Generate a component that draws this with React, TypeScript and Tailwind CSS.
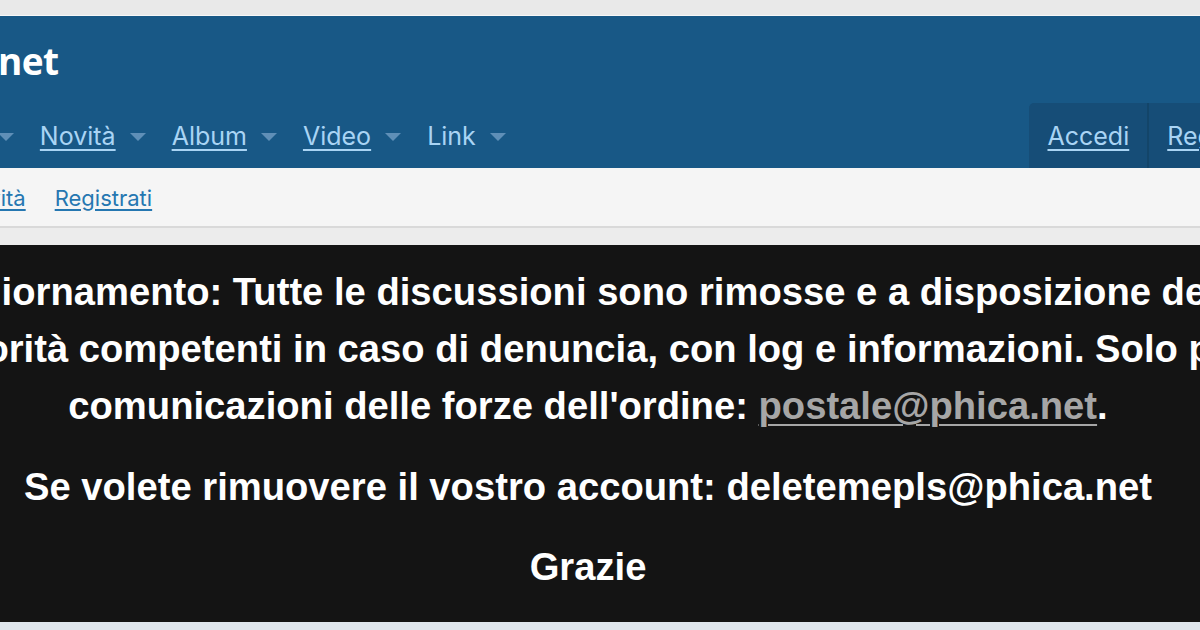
import React from "react";

const Caret = ({ className = "" }: { className?: string }) => (
  <svg width="16" height="9" viewBox="0 0 16 9" className={className}>
    <path d="M0 0 L16 0 L8 8 Z" fill="#5f8fb7" />
  </svg>
);

const navItems = ["Novità", "Album", "Video", "Link"];

export default function App() {
  const sys = { fontFamily: "Inter, Roboto, 'Noto Sans', sans-serif" };
  return (
    <div className="w-[1200px] h-[630px] overflow-hidden bg-[#ececec] flex flex-col" style={sys}>
      <div className="h-[16px] bg-[#e9e9e9] border-b border-[#f7f7f7] shrink-0" />
      <header className="bg-[#185886] shrink-0">
        <div className="h-[87px] flex items-center">
          <div
            className="ml-[-110px] text-white text-[37px] font-bold leading-none mt-[2px] tracking-[-0.5px]"
            style={{ fontFamily: "'Open Sans', sans-serif" }}
          >
            phica.net
          </div>
        </div>
        <div className="h-[65px] flex items-stretch">
          <nav className="flex items-center ml-[-91px] gap-[26px] pt-[2px]">
            <div className="flex items-center gap-[14px]">
              <a className="text-[25px] text-[#a9d4f4] underline underline-offset-[4px] decoration-[2px]">Forum</a>
              <Caret className="mt-[2px]" />
            </div>
            {navItems.map((n) => (
              <div key={n} className="flex items-center gap-[14px]">
                <a
                  className={
                    n === "Link"
                      ? "text-[25px] text-[#a9d4f4]"
                      : "text-[25px] text-[#a9d4f4] underline underline-offset-[4px] decoration-[2px]"
                  }
                >
                  {n}
                </a>
                <Caret className="mt-[2px]" />
              </div>
            ))}
          </nav>
          <div className="ml-auto flex items-stretch mr-[-96px]">
            <div className="bg-[#164d77] rounded-tl-[5px] flex items-center px-[18px] pt-[2px] border-r-2 border-[#134569]">
              <a className="text-[25px] text-[#a9d4f4] underline underline-offset-[4px] decoration-[2px]">Accedi</a>
            </div>
            <div className="bg-[#164d77] flex items-center px-[18px] pt-[2px]">
              <a className="text-[25px] text-[#a9d4f4] underline underline-offset-[4px] decoration-[2px]">Registrati</a>
            </div>
          </div>
        </div>
      </header>
      <div className="h-[60px] bg-[#f5f5f5] border-b-2 border-[#d9d9d9] flex items-center shrink-0">
        <div className="flex items-center gap-[29px] ml-[-41px] pt-[2px]">
          <a className="text-[22px] text-[#2577b1] underline underline-offset-[3px] decoration-[2px]">Novità</a>
          <a className="text-[22px] text-[#2577b1] underline underline-offset-[3px] decoration-[2px]">Registrati</a>
        </div>
      </div>
      <div className="h-[17px] bg-[#ececec] shrink-0" />
      <main className="h-[377px] bg-[#141414] shrink-0 w-[1200px]">
        <div
          className="w-[1176px] text-white font-bold text-[38.2px] leading-[57px] flex flex-col items-center pt-[18px]"
          style={{ fontFamily: "'Liberation Sans', Arial, sans-serif" }}
        >
          <p className="whitespace-nowrap">Aggiornamento: Tutte le discussioni sono rimosse e a disposizione delle</p>
          <p className="whitespace-nowrap">autorità competenti in caso di denuncia, con log e informazioni. Solo per</p>
          <p className="whitespace-nowrap">
            comunicazioni delle forze dell'ordine:{" "}
            <a className="text-[#a6a6a6] underline underline-offset-[5px] decoration-[2px]">postale@phica.net</a>.
          </p>
          <p className="whitespace-nowrap mt-[24px]">Se volete rimuovere il vostro account: deletemepls@phica.net</p>
          <p className="whitespace-nowrap mt-[23px]">Grazie</p>
        </div>
      </main>
      <div className="h-[8px] bg-[#dfe6ec] shrink-0" />
    </div>
  );
}
